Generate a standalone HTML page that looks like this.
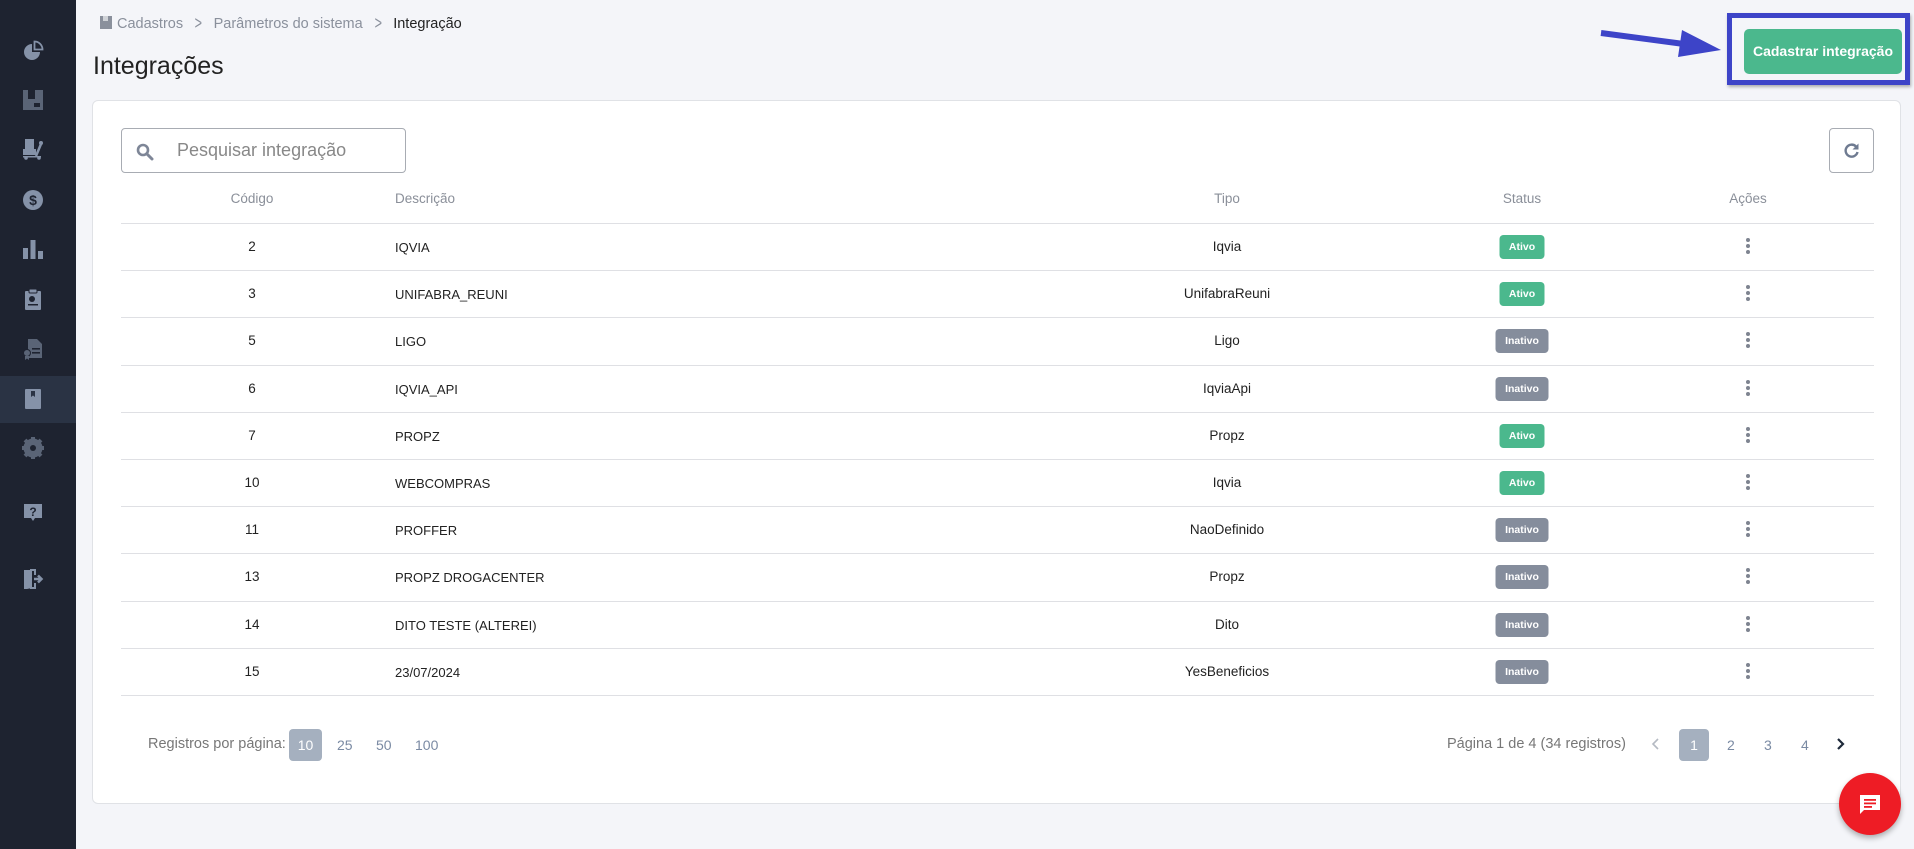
<!DOCTYPE html>
<html><head><meta charset="utf-8">
<style>
*{box-sizing:border-box;margin:0;padding:0}
body{width:1914px;height:849px;background:#f4f5f9;font-family:"Liberation Sans",sans-serif;position:relative;overflow:hidden;color:#333}
.sb{position:absolute;left:0;top:0;width:76px;height:849px;background:#1e2330}
.sb .act{position:absolute;left:0;top:376px;width:76px;height:47px;background:#2a3344}
.ic{position:absolute;left:22px;width:22px;height:22px}
.abs{position:absolute}
.bc{top:16px;left:100px;font-size:14.5px;color:#8a909c;white-space:nowrap}
.bc b{font-weight:normal;display:inline-block;margin:0 10px;transform:scaleX(.7);font-size:18px;line-height:14px;vertical-align:-1px}
.title{top:52px;left:93px;font-size:25px;color:#222}
.card{left:92px;top:100px;width:1809px;height:704px;background:#fff;border:1px solid #e0e2e6;border-radius:6px}
.search{left:121px;top:128px;width:285px;height:45px;border:1px solid #a8acb3;border-radius:4px}
.search span{position:absolute;left:55px;top:11px;font-size:18px;color:#888}
.ref{left:1829px;top:128px;width:45px;height:45px;border:1px solid #a8acb3;border-radius:4px}
.hd{top:191px;font-size:13.5px;color:#8a8f99}
.line{left:121px;width:1753px;height:1px;background:#dfe0e4}
.cell{font-size:13.5px;color:#222;white-space:nowrap}
.desc{font-size:13px}
.c{transform:translateX(-50%)}
.badge{height:24px;border-radius:4px;color:#fff;font-size:10.5px;font-weight:bold;line-height:24px;text-align:center;transform:translateX(-50%)}
.on{background:#4bb88d;width:45px}
.off{background:#858d9c;width:53px}
.dots{width:4px}
.dots i{display:block;width:4px;height:4px;border-radius:2px;background:#7e8490;margin-bottom:2px}
.pg{font-size:14.5px;color:#777;white-space:nowrap}
.pb{font-size:14px;color:#7a8aa3}
.sel{background:#a5b0bf;color:#fff;border-radius:4px;text-align:center;line-height:32px;height:32px}
</style></head><body>
<div class="sb">
<div class="act"></div>
<svg class="ic" style="top:40px" viewBox="0 0 22 22"><path d="M10 4A8 8 0 1 0 18 12H10Z" fill="#8592a8"/><path d="M12.5 1.5V9.5H20.5A8 8 0 0 0 12.5 1.5Z" fill="none" stroke="#8592a8" stroke-width="1.8"/></svg>
<svg class="ic" style="top:89px" viewBox="0 0 22 22"><rect x="1" y="1" width="20" height="20" fill="#5a6476"/><rect x="6" y="1" width="7" height="9" fill="#1e2330"/><rect x="12" y="14" width="6" height="4" fill="#1e2330"/></svg>
<svg class="ic" style="top:138px" viewBox="0 0 22 22"><rect x="3" y="1" width="9" height="10" fill="#8592a8"/><rect x="1" y="11" width="13" height="6" fill="#8592a8"/><path d="M14 18L19 6" stroke="#8592a8" stroke-width="2.5"/><circle cx="19" cy="5" r="2" fill="#8592a8"/><circle cx="4" cy="20" r="1.8" fill="#8592a8"/><circle cx="17" cy="20" r="1.8" fill="#8592a8"/><rect x="1" y="18" width="18" height="1.5" fill="#8592a8"/></svg>
<svg class="ic" style="top:189px" viewBox="0 0 22 22"><circle cx="11" cy="11" r="10" fill="#8592a8"/><text x="11" y="16" font-size="14" font-weight="bold" fill="#1e2330" text-anchor="middle" font-family="Liberation Sans">$</text></svg>
<svg class="ic" style="top:238px" viewBox="0 0 22 22"><rect x="1" y="10" width="5" height="11" fill="#8592a8"/><rect x="8.5" y="2" width="5" height="19" fill="#8592a8"/><rect x="16" y="13" width="5" height="8" fill="#8592a8"/></svg>
<svg class="ic" style="top:288px" viewBox="0 0 22 22"><rect x="3" y="3" width="16" height="19" rx="1" fill="#8592a8"/><rect x="7" y="1" width="8" height="4" rx="1" fill="#8592a8" stroke="#1e2330"/><circle cx="10" cy="11" r="3" fill="#1e2330"/><rect x="6" y="16" width="10" height="1.5" fill="#1e2330"/></svg>
<svg class="ic" style="top:338px" viewBox="0 0 22 22"><path d="M6 1H15L20 6V20H6Z" fill="#5a6476"/><rect x="10" y="10" width="8" height="1.6" fill="#1e2330"/><rect x="10" y="14" width="8" height="1.6" fill="#1e2330"/><circle cx="5" cy="15" r="3.5" fill="#5a6476" stroke="#1e2330"/><path d="M3 18V22L5 20.5L7 22V18" fill="#5a6476"/></svg>
<svg class="ic" style="top:388px" viewBox="0 0 22 22"><rect x="3" y="1" width="16" height="20" rx="1" fill="#8592a8"/><path d="M9 3H13V9L11 7.5L9 9Z" fill="#2a3344"/></svg>
<svg class="ic" style="top:437px" viewBox="0 0 22 22"><circle cx="11" cy="11" r="7" fill="none" stroke="#5a6476" stroke-width="5"/><g stroke="#5a6476" stroke-width="4"><path d="M11 0V22M0 11H22M3 3L19 19M19 3L3 19"/></g><circle cx="11" cy="11" r="3" fill="#1e2330"/></svg>
<svg class="ic" style="top:502px" viewBox="0 0 22 22"><path d="M2 2H20V16H13L11 19L9 16H2Z" fill="#8592a8"/><text x="11" y="14" font-size="12" font-weight="bold" fill="#1e2330" text-anchor="middle" font-family="Liberation Sans">?</text></svg>
<svg class="ic" style="top:568px" viewBox="0 0 22 22"><path d="M2 2H10V20L5 21H2Z" fill="#8592a8"/><path d="M8 2H13V7M13 15V20H8" fill="none" stroke="#8592a8" stroke-width="2"/><path d="M12 11H19M16 7.5L19.5 11L16 14.5" fill="none" stroke="#8592a8" stroke-width="2.5"/></svg>
</div>

<div class="abs bc"><svg width="12" height="13" style="vertical-align:-1px;margin-right:5px" viewBox="0 0 12 13"><rect width="12" height="13" fill="#8a909c"/><rect x="3" y="0" width="5" height="5" fill="#d0d3d8"/></svg>Cadastros<b>&gt;</b>Parâmetros do sistema<b>&gt;</b><span style="color:#222">Integração</span></div>
<div class="abs title">Integrações</div>

<svg class="abs" style="left:1595px;top:25px" width="135" height="40" viewBox="1595 25 135 40"><path d="M1601 33L1684 44" stroke="#3d44c8" stroke-width="6"/><path d="M1682 30L1721 50L1678 57Z" fill="#3d44c8"/></svg>
<div class="abs" style="left:1727px;top:13px;width:183px;height:72px;border:5px solid #3d44c8;box-shadow:1px 2px 3px rgba(0,0,0,.3)"></div>
<div class="abs" style="left:1744px;top:29px;width:158px;height:45px;background:#4bb88d;border-radius:5px;color:#fff;font-size:14px;font-weight:bold;text-align:center;line-height:45px">Cadastrar integração</div>

<div class="abs card"></div>
<div class="abs search"><svg style="position:absolute;left:14px;top:14px" width="18" height="18" viewBox="0 0 18 18"><circle cx="7" cy="7" r="5" fill="none" stroke="#7e8697" stroke-width="2.6"/><path d="M11 11L16 16" stroke="#7e8697" stroke-width="3" stroke-linecap="round"/></svg><span>Pesquisar integração</span></div>
<div class="abs ref"><svg style="position:absolute;left:13px;top:13px" width="18" height="18" viewBox="0 0 18 18"><path d="M14.5 10A6 6 0 1 1 13 4.5" fill="none" stroke="#6f7b91" stroke-width="2.4"/><path d="M15.5 1.5V7.5H9.5Z" fill="#6f7b91"/></svg></div>

<div class="abs hd c" style="left:252px">Código</div>
<div class="abs hd" style="left:395px">Descrição</div>
<div class="abs hd c" style="left:1227px">Tipo</div>
<div class="abs hd c" style="left:1522px">Status</div>
<div class="abs hd c" style="left:1748px">Ações</div>
<div class="abs line" style="top:223px"></div>

<div id="rows"></div>
<script>
var d=[["2","IQVIA","Iqvia",1],["3","UNIFABRA_REUNI","UnifabraReuni",1],["5","LIGO","Ligo",0],["6","IQVIA_API","IqviaApi",0],["7","PROPZ","Propz",1],["10","WEBCOMPRAS","Iqvia",1],["11","PROFFER","NaoDefinido",0],["13","PROPZ DROGACENTER","Propz",0],["14","DITO TESTE (ALTEREI)","Dito",0],["15","23/07/2024","YesBeneficios",0]];
var h="";
for(var i=0;i<d.length;i++){var t=Math.round(223+i*47.2);var y=t+16;var nb=Math.round(223+(i+1)*47.2);
h+='<div class="abs cell c" style="left:252px;top:'+y+'px">'+d[i][0]+'</div>';
h+='<div class="abs cell desc" style="left:395px;top:'+(y+1)+'px">'+d[i][1]+'</div>';
h+='<div class="abs cell c" style="left:1227px;top:'+y+'px">'+d[i][2]+'</div>';
h+='<div class="abs badge '+(d[i][3]?'on':'off')+'" style="left:1522px;top:'+(t+12)+'px">'+(d[i][3]?'Ativo':'Inativo')+'</div>';
h+='<div class="abs dots" style="left:1746px;top:'+(t+15)+'px"><i></i><i></i><i></i></div>';
h+='<div class="abs line" style="top:'+nb+'px"></div>';}
document.getElementById("rows").innerHTML=h;
</script>

<div class="abs pg" style="left:148px;top:736px">Registros por página:</div>
<div class="abs sel pb" style="left:289px;top:729px;width:33px;font-size:14px">10</div>
<div class="abs pb" style="left:337px;top:737px">25</div>
<div class="abs pb" style="left:376px;top:737px">50</div>
<div class="abs pb" style="left:415px;top:737px">100</div>

<div class="abs pg" style="left:1447px;top:736px">Página 1 de 4 (34 registros)</div>
<svg class="abs" style="left:1651px;top:737px" width="10" height="14" viewBox="0 0 10 14"><path d="M7 2L2 7L7 12" fill="none" stroke="#b5bac3" stroke-width="1.6"/></svg>
<div class="abs sel pb" style="left:1679px;top:729px;width:30px">1</div>
<div class="abs pb" style="left:1727px;top:737px">2</div>
<div class="abs pb" style="left:1764px;top:737px">3</div>
<div class="abs pb" style="left:1801px;top:737px">4</div>
<svg class="abs" style="left:1836px;top:737px" width="10" height="14" viewBox="0 0 10 14"><path d="M2 2L7 7L2 12" fill="none" stroke="#1e2a3a" stroke-width="2.2"/></svg>

<div class="abs" style="left:1839px;top:773px;width:62px;height:62px;border-radius:31px;background:#ee1c25;box-shadow:0 3px 6px rgba(0,0,0,.3)"><svg style="position:absolute;left:19px;top:20px" width="24" height="24" viewBox="0 0 24 24"><path d="M2 2H22V17H6L2 21Z" fill="#fff"/><rect x="6" y="6" width="12" height="1.8" fill="#ee1c25"/><rect x="6" y="9.5" width="12" height="1.8" fill="#ee1c25"/><rect x="6" y="13" width="8" height="1.8" fill="#ee1c25"/></svg></div>
</body></html>
